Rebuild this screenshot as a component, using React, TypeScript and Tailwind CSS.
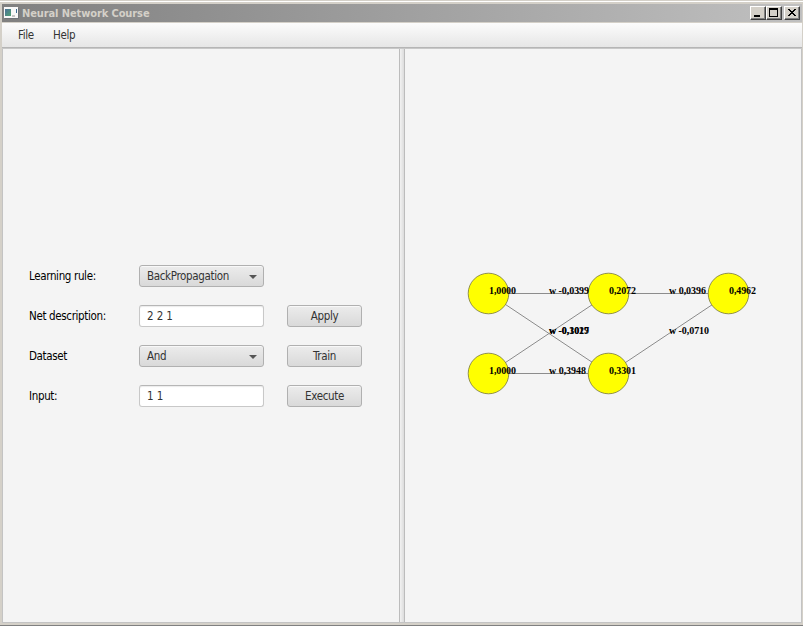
import React from "react";

const UI = "font-['DejaVu_Sans_Condensed','DejaVu_Sans',sans-serif]";
const BUTTON =
  "rounded-[3px] border border-[#b0b0b0] bg-gradient-to-b from-[#ececec] to-[#d9d9d9] shadow-[inset_0_1px_0_#f8f8f8]";

function AppIcon() {
  return (
    <svg width="16" height="14" viewBox="0 0 16 14" shapeRendering="crispEdges">
      <defs>
        <linearGradient id="pane" x1="0" y1="0" x2="1" y2="1">
          <stop offset="0" stopColor="#4c6f98" />
          <stop offset="1" stopColor="#4fa374" />
        </linearGradient>
      </defs>
      <rect x="1" y="2" width="14" height="11" fill="#707479" />
      <rect x="0" y="1" width="14" height="11" fill="#f8f8f8" />
      <rect x="1" y="3" width="6" height="7" fill="url(#pane)" />
      <rect x="8" y="9" width="3" height="2" fill="#c6c6c6" />
      <rect x="12" y="3" width="1" height="4" fill="#3c6c92" />
    </svg>
  );
}

function CaptionButton({ children, className = "" }: { children: React.ReactNode; className?: string }) {
  return (
    <button
      className={`h-[14px] w-4 border border-t-white border-l-white border-r-[#404040] border-b-[#404040] bg-[#d4d0c8] shadow-[inset_-1px_-1px_0_#808080] ${className}`}
    >
      <svg width="14" height="12" viewBox="0 0 14 12" shapeRendering="crispEdges" className="block">
        {children}
      </svg>
    </button>
  );
}

function TitleBar() {
  return (
    <header className="flex h-[18px] items-center bg-gradient-to-r from-[#808080] to-[#c0c0c0] pl-[2px] pr-[2px]">
      <AppIcon />
      <h1 className={`ml-[2px] flex-1 whitespace-nowrap pt-px text-[11px] leading-[18px] font-bold tracking-[-0.1px] text-[#d4d0c8] ${UI}`}>
        Neural Network Course
      </h1>
      <CaptionButton>
        <rect x="3" y="8" width="6" height="2" />
      </CaptionButton>
      <CaptionButton>
        <path d="M2 1h9v9H2zM3 3v6h7V3z" fillRule="evenodd" />
      </CaptionButton>
      <CaptionButton className="ml-[2px]">
        <path d="M3 2h2v1h1v1h2V3h1V2h2v1h-1v1H9v1H8v1h1v1h1v1h1v1H9V8H8V7H6v1H5v1H3V8h1V7h1V6h1V5H5V4H4V3H3z" />
      </CaptionButton>
    </header>
  );
}

function Select({ value }: { value: string }) {
  return (
    <button className={`flex h-[22px] w-[125px] items-center justify-between pr-[6px] pl-[7px] text-[#333] ${BUTTON}`}>
      <span className="whitespace-nowrap pt-px">{value}</span>
      <svg width="8" height="4" viewBox="0 0 8 4" className="mt-px">
        <path d="M0 0h8L4 4z" fill="#555" />
      </svg>
    </button>
  );
}

function Field({ value }: { value: string }) {
  return (
    <div className="flex h-[22px] w-[125px] items-center rounded-[3px] border border-[#c8c8c8] border-t-[#b6b6b6] bg-white pt-px pl-[7px] tracking-[-0.1px] text-[#333] shadow-[inset_0_1px_1px_#ececec]">
      {value}
    </div>
  );
}

function Row({ label, action, children }: { label: string; action?: string; children: React.ReactNode }) {
  return (
    <div className="flex h-[22px] items-center">
      <label className="w-[110px] whitespace-nowrap pt-px text-black">{label}</label>
      {children}
      {action && <button className={`ml-[23px] h-[22px] w-[75px] pt-px text-[#333] ${BUTTON}`}>{action}</button>}
    </div>
  );
}

const neurons = [
  { x: 84, y: 245, v: "1,0000" },
  { x: 84, y: 325, v: "1,0000" },
  { x: 204, y: 245, v: "0,2072" },
  { x: 204, y: 325, v: "0,3301" },
  { x: 324, y: 245, v: "0,4962" },
];
const links = [
  { a: 0, b: 2, w: "w -0,0399" },
  { a: 0, b: 3, w: "w -0,1027" },
  { a: 1, b: 2, w: "w -0,3019" },
  { a: 1, b: 3, w: "w 0,3948" },
  { a: 2, b: 4, w: "w 0,0396" },
  { a: 3, b: 4, w: "w -0,0710" },
];

function Network() {
  return (
    <svg
      width="396"
      height="573"
      viewBox="0 0 396 573"
      className="block font-['Liberation_Serif',serif] text-[10px] font-bold"
    >
      {links.map((l, i) => (
        <line
          key={i}
          x1={neurons[l.a].x}
          y1={neurons[l.a].y - 0.5}
          x2={neurons[l.b].x}
          y2={neurons[l.b].y - 0.5}
          stroke="#8c8c8c"
        />
      ))}
      {neurons.map((n, i) => (
        <circle key={i} cx={n.x - 0.5} cy={n.y - 0.5} r="20.3" fill="#ff0" stroke="#77773c" strokeWidth="0.8" />
      ))}
      {links.map((l, i) => (
        <text
          key={i}
          x={(neurons[l.a].x + neurons[l.b].x) / 2}
          y={(neurons[l.a].y + neurons[l.b].y) / 2}
          textLength={l.w.includes("-") ? 40 : 37}
        >
          {l.w}
        </text>
      ))}
      {neurons.map((n, i) => (
        <text key={i} x={n.x} y={n.y} textLength="27">
          {n.v}
        </text>
      ))}
    </svg>
  );
}

export default function App() {
  return (
    <div className="flex h-[626px] w-[803px] flex-col border-b border-[#808080] bg-[#d4d0c8]">
      <div className="mt-px h-px shrink-0 bg-white" />
      <div className="mt-[2px] mr-px ml-[2px] flex min-h-0 flex-1 flex-col pb-[2px]">
        <TitleBar />
        <nav
          className={`mt-px flex h-[24px] shrink-0 items-center bg-gradient-to-b from-[#fcfcfc] to-[#e6e6e6] pt-[2px] pl-4 text-[11.5px] tracking-[-0.35px] text-[#333] ${UI}`}
        >
          <span className="w-[35px]">File</span>
          <span>Help</span>
        </nav>
        <div className="h-[2px] shrink-0 border-t border-[#b5b5b5] bg-[#c8c8c8]" />
        <main className="flex h-[574px] border border-t-0 border-[#c3c3c3] bg-[#f4f4f4]">
          <section className={`w-[396px] pt-[216px] pl-[26px] text-[11.5px] tracking-[-0.35px] ${UI}`}>
            <div className="flex flex-col gap-[18px]">
              <Row label="Learning rule:">
                <Select value="BackPropagation" />
              </Row>
              <Row label="Net description:" action="Apply">
                <Field value="2 2 1" />
              </Row>
              <Row label="Dataset" action="Train">
                <Select value="And" />
              </Row>
              <Row label="Input:" action="Execute">
                <Field value="1 1" />
              </Row>
            </div>
          </section>
          <div className="w-[6px] shrink-0 border-x border-[#bcbcbc] bg-gradient-to-r from-[#f2f2f2] to-[#dcdcdc]" />
          <section className="min-w-0 flex-1 overflow-hidden">
            <Network />
          </section>
        </main>
      </div>
    </div>
  );
}
